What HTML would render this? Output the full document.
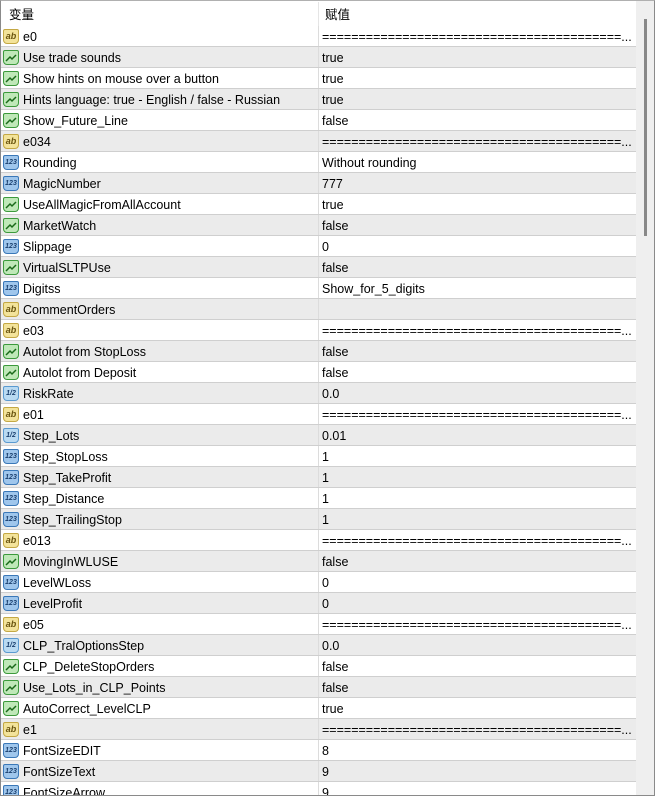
<!DOCTYPE html>
<html><head><meta charset="utf-8"><style>
*{margin:0;padding:0;box-sizing:border-box}
html,body{width:655px;height:796px;overflow:hidden}
body{background:#fff;font-family:"Liberation Sans","Noto Sans CJK SC",sans-serif;font-size:12.5px;color:#000;position:relative}
.frame{position:absolute;left:0;top:0;width:655px;height:796px;border:1px solid #8a8a8a;border-top:1px solid #b0b0b0}
.hdr{position:absolute;left:1px;top:1px;width:635px;height:25px;background:#fff}
.hdr span{position:absolute;top:3px}
.hsep{position:absolute;left:318px;top:2px;width:1px;height:24px;background:#e5e5e5}
.row{position:absolute;left:1px;width:635px;height:21px;border-bottom:1px solid #cfcfcf}
.g{background:#ebebeb}
.row .n{position:absolute;left:22px;top:4px;white-space:nowrap}
.row .v{position:absolute;left:321px;top:4px;white-space:nowrap}
.row .d{position:absolute;left:317px;top:0;width:1px;height:20px;background:#dcdcdc}
.ic{position:absolute;left:2px;top:3px;width:16px;height:15px;border-radius:2px 2px 4px 4px;font-size:8px;font-weight:bold;line-height:13px;text-align:center}
.ab{background:#f3e39a;border:1px solid #c4a844;color:#6a5510;font-size:9px}
.bo{background:#bfe8b8;border:1px solid #3c9a3c}
.in{background:#9fc6ec;border:1px solid #3a78b8;color:#1a3f6e;font-size:7px}
.db{background:#b9daf2;border:1px solid #5a9ad0;color:#1a3f6e;font-size:7px}
.sb{position:absolute;left:636px;top:1px;width:18px;height:794px;background:#efefef}
.th{position:absolute;left:644px;top:19px;width:3px;height:217px;background:#888}
.wrap{position:absolute;left:0;top:0;width:655px;height:795px;overflow:hidden}
</style></head><body>
<div class="wrap">
<div class="hdr"><span style="left:8px">变量</span><span style="left:324px">赋值</span></div>
<div class="hsep"></div>
<div class="row" style="top:26px"><i class="ic ab">ab</i><span class="n">e0</span><i class="d"></i><span class="v">=========================================...</span></div>
<div class="row g" style="top:47px"><i class="ic bo"><svg width="14" height="13"><path d="M2 10 L6 6 L8 8 L12 4" stroke="#1a6a1a" stroke-width="1.5" fill="none"/></svg></i><span class="n">Use trade sounds</span><i class="d"></i><span class="v">true</span></div>
<div class="row" style="top:68px"><i class="ic bo"><svg width="14" height="13"><path d="M2 10 L6 6 L8 8 L12 4" stroke="#1a6a1a" stroke-width="1.5" fill="none"/></svg></i><span class="n">Show hints on mouse over a button</span><i class="d"></i><span class="v">true</span></div>
<div class="row g" style="top:89px"><i class="ic bo"><svg width="14" height="13"><path d="M2 10 L6 6 L8 8 L12 4" stroke="#1a6a1a" stroke-width="1.5" fill="none"/></svg></i><span class="n">Hints language: true - English / false - Russian</span><i class="d"></i><span class="v">true</span></div>
<div class="row" style="top:110px"><i class="ic bo"><svg width="14" height="13"><path d="M2 10 L6 6 L8 8 L12 4" stroke="#1a6a1a" stroke-width="1.5" fill="none"/></svg></i><span class="n">Show_Future_Line</span><i class="d"></i><span class="v">false</span></div>
<div class="row g" style="top:131px"><i class="ic ab">ab</i><span class="n">e034</span><i class="d"></i><span class="v">=========================================...</span></div>
<div class="row" style="top:152px"><i class="ic in">123</i><span class="n">Rounding</span><i class="d"></i><span class="v">Without rounding</span></div>
<div class="row g" style="top:173px"><i class="ic in">123</i><span class="n">MagicNumber</span><i class="d"></i><span class="v">777</span></div>
<div class="row" style="top:194px"><i class="ic bo"><svg width="14" height="13"><path d="M2 10 L6 6 L8 8 L12 4" stroke="#1a6a1a" stroke-width="1.5" fill="none"/></svg></i><span class="n">UseAllMagicFromAllAccount</span><i class="d"></i><span class="v">true</span></div>
<div class="row g" style="top:215px"><i class="ic bo"><svg width="14" height="13"><path d="M2 10 L6 6 L8 8 L12 4" stroke="#1a6a1a" stroke-width="1.5" fill="none"/></svg></i><span class="n">MarketWatch</span><i class="d"></i><span class="v">false</span></div>
<div class="row" style="top:236px"><i class="ic in">123</i><span class="n">Slippage</span><i class="d"></i><span class="v">0</span></div>
<div class="row g" style="top:257px"><i class="ic bo"><svg width="14" height="13"><path d="M2 10 L6 6 L8 8 L12 4" stroke="#1a6a1a" stroke-width="1.5" fill="none"/></svg></i><span class="n">VirtualSLTPUse</span><i class="d"></i><span class="v">false</span></div>
<div class="row" style="top:278px"><i class="ic in">123</i><span class="n">Digitss</span><i class="d"></i><span class="v">Show_for_5_digits</span></div>
<div class="row g" style="top:299px"><i class="ic ab">ab</i><span class="n">CommentOrders</span><i class="d"></i><span class="v"></span></div>
<div class="row" style="top:320px"><i class="ic ab">ab</i><span class="n">e03</span><i class="d"></i><span class="v">=========================================...</span></div>
<div class="row g" style="top:341px"><i class="ic bo"><svg width="14" height="13"><path d="M2 10 L6 6 L8 8 L12 4" stroke="#1a6a1a" stroke-width="1.5" fill="none"/></svg></i><span class="n">Autolot from StopLoss</span><i class="d"></i><span class="v">false</span></div>
<div class="row" style="top:362px"><i class="ic bo"><svg width="14" height="13"><path d="M2 10 L6 6 L8 8 L12 4" stroke="#1a6a1a" stroke-width="1.5" fill="none"/></svg></i><span class="n">Autolot from Deposit</span><i class="d"></i><span class="v">false</span></div>
<div class="row g" style="top:383px"><i class="ic db">1/2</i><span class="n">RiskRate</span><i class="d"></i><span class="v">0.0</span></div>
<div class="row" style="top:404px"><i class="ic ab">ab</i><span class="n">e01</span><i class="d"></i><span class="v">=========================================...</span></div>
<div class="row g" style="top:425px"><i class="ic db">1/2</i><span class="n">Step_Lots</span><i class="d"></i><span class="v">0.01</span></div>
<div class="row" style="top:446px"><i class="ic in">123</i><span class="n">Step_StopLoss</span><i class="d"></i><span class="v">1</span></div>
<div class="row g" style="top:467px"><i class="ic in">123</i><span class="n">Step_TakeProfit</span><i class="d"></i><span class="v">1</span></div>
<div class="row" style="top:488px"><i class="ic in">123</i><span class="n">Step_Distance</span><i class="d"></i><span class="v">1</span></div>
<div class="row g" style="top:509px"><i class="ic in">123</i><span class="n">Step_TrailingStop</span><i class="d"></i><span class="v">1</span></div>
<div class="row" style="top:530px"><i class="ic ab">ab</i><span class="n">e013</span><i class="d"></i><span class="v">=========================================...</span></div>
<div class="row g" style="top:551px"><i class="ic bo"><svg width="14" height="13"><path d="M2 10 L6 6 L8 8 L12 4" stroke="#1a6a1a" stroke-width="1.5" fill="none"/></svg></i><span class="n">MovingInWLUSE</span><i class="d"></i><span class="v">false</span></div>
<div class="row" style="top:572px"><i class="ic in">123</i><span class="n">LevelWLoss</span><i class="d"></i><span class="v">0</span></div>
<div class="row g" style="top:593px"><i class="ic in">123</i><span class="n">LevelProfit</span><i class="d"></i><span class="v">0</span></div>
<div class="row" style="top:614px"><i class="ic ab">ab</i><span class="n">e05</span><i class="d"></i><span class="v">=========================================...</span></div>
<div class="row g" style="top:635px"><i class="ic db">1/2</i><span class="n">CLP_TralOptionsStep</span><i class="d"></i><span class="v">0.0</span></div>
<div class="row" style="top:656px"><i class="ic bo"><svg width="14" height="13"><path d="M2 10 L6 6 L8 8 L12 4" stroke="#1a6a1a" stroke-width="1.5" fill="none"/></svg></i><span class="n">CLP_DeleteStopOrders</span><i class="d"></i><span class="v">false</span></div>
<div class="row g" style="top:677px"><i class="ic bo"><svg width="14" height="13"><path d="M2 10 L6 6 L8 8 L12 4" stroke="#1a6a1a" stroke-width="1.5" fill="none"/></svg></i><span class="n">Use_Lots_in_CLP_Points</span><i class="d"></i><span class="v">false</span></div>
<div class="row" style="top:698px"><i class="ic bo"><svg width="14" height="13"><path d="M2 10 L6 6 L8 8 L12 4" stroke="#1a6a1a" stroke-width="1.5" fill="none"/></svg></i><span class="n">AutoCorrect_LevelCLP</span><i class="d"></i><span class="v">true</span></div>
<div class="row g" style="top:719px"><i class="ic ab">ab</i><span class="n">e1</span><i class="d"></i><span class="v">=========================================...</span></div>
<div class="row" style="top:740px"><i class="ic in">123</i><span class="n">FontSizeEDIT</span><i class="d"></i><span class="v">8</span></div>
<div class="row g" style="top:761px"><i class="ic in">123</i><span class="n">FontSizeText</span><i class="d"></i><span class="v">9</span></div>
<div class="row" style="top:782px"><i class="ic in">123</i><span class="n">FontSizeArrow</span><i class="d"></i><span class="v">9</span></div>
<div class="sb"></div><div class="th"></div>
</div>
<div class="frame"></div>
</body></html>
